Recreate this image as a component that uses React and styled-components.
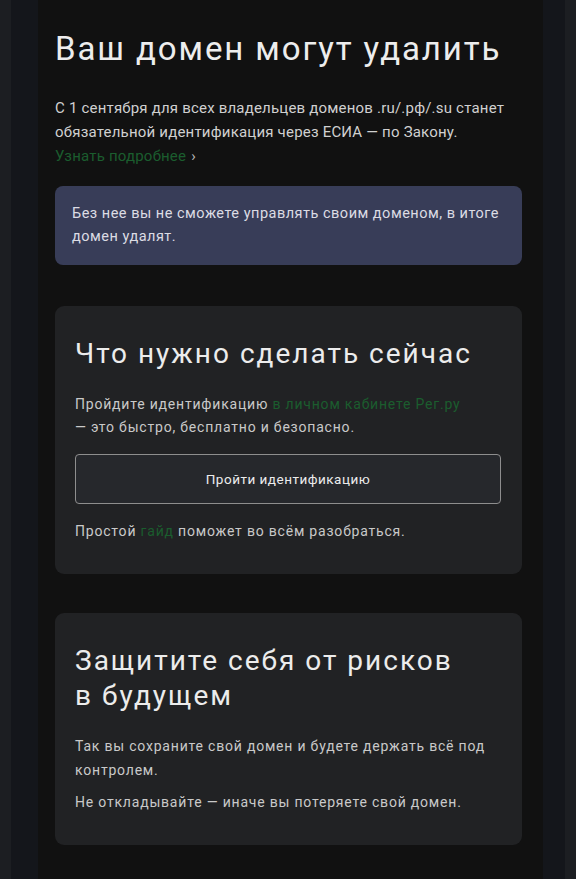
import React from "react";
import styled, { createGlobalStyle } from "styled-components";

const Global = createGlobalStyle`
  html, body { margin: 0; padding: 0; background: #1c1e22; }
  body { font-family: Roboto, "Noto Sans", sans-serif; -webkit-font-smoothing: antialiased; }
  * { box-sizing: border-box; }
`;

const Page = styled.div`
  min-height: 879px;
  padding: 0 11px;
  background: #1c1e22;
  display: flex;
`;

const Frame = styled.div`
  flex: 1;
  background: #14161b;
  padding: 0 22px 0 27px;
  display: flex;
`;

const Column = styled.main`
  flex: 1;
  background: #111111;
  padding: 30px 21px 34px 17px;
  display: flex;
  flex-direction: column;
`;

const Title = styled.h1`
  margin: 0;
  font-size: 33px;
  font-weight: 400;
  line-height: 38px;
  color: #ededed;
  letter-spacing: 1.9px;
`;

const Lead = styled.p`
  margin: 28px 0 0;
  font-size: 15px;
  line-height: 24px;
  color: #d0d0d0;
  letter-spacing: 0.2px;
  white-space: nowrap;
`;

const Link = styled.a`
  color: #1b5d2e;
  text-decoration: none;
`;

const Chevron = styled.span`
  color: #b8b8b8;
  margin-left: 5px;
`;

const Notice = styled.div`
  margin-top: 18px;
  background: #383d58;
  border-radius: 8px;
  padding: 16px 12px 17px 17px;
  font-size: 14.5px;
  line-height: 23px;
  color: #dcdce4;
  letter-spacing: 0.5px;
  white-space: nowrap;
`;

const Card = styled.section`
  margin-top: ${(p) => p.$gap}px;
  background: #212224;
  border-radius: 9px;
  padding: ${(p) => p.$pad};
  display: flex;
  flex-direction: column;
`;

const CardTitle = styled.h2`
  margin: 0;
  font-size: 28px;
  font-weight: 400;
  line-height: 35px;
  color: #ececec;
  letter-spacing: 2px;
`;

const Text = styled.p`
  margin: ${(p) => p.$mt}px 0 0;
  font-size: 14px;
  line-height: ${(p) => p.$lh || 23}px;
  color: #c9c9c9;
  letter-spacing: 0.8px;
`;

const Button = styled.button`
  margin-top: 15px;
  height: 50px;
  width: 100%;
  background: #26282c;
  border: 1.5px solid #8e8e8e;
  border-radius: 4px;
  color: #ececec;
  font-family: Roboto, "Noto Sans", sans-serif;
  font-size: 13.5px;
  font-weight: 400;
  letter-spacing: 0.5px;
  cursor: pointer;
`;

export default function App() {
  return (
    <>
      <Global />
      <Page>
        <Frame>
          <Column>
            <Title>Ваш домен могут удалить</Title>
            <Lead>
              С 1 сентября для всех владельцев доменов .ru/.рф/.su станет
              <br />
              обязательной идентификация через ЕСИА — по Закону.
              <br />
              <Link href="#">Узнать подробнее</Link>
              <Chevron>›</Chevron>
            </Lead>
            <Notice>
              Без нее вы не сможете управлять своим доменом, в итоге
              <br />
              домен удалят.
            </Notice>
            <Card $gap={41} $pad="30px 21px 31px 20px">
              <CardTitle>Что нужно сделать сейчас</CardTitle>
              <Text $mt={22}>
                Пройдите идентификацию <Link href="#">в личном кабинете Рег.ру</Link>
                <br />— это быстро, бесплатно и безопасно.
              </Text>
              <Button>Пройти идентификацию</Button>
              <Text $mt={16}>
                Простой <Link href="#">гайд</Link> поможет во всём разобраться.
              </Text>
            </Card>
            <Card $gap={39} $pad="30px 21px 31px 20px">
              <CardTitle>
                Защитите себя от рисков
                <br />в будущем
              </CardTitle>
              <Text $mt={21} $lh={24}>
                Так вы сохраните свой домен и будете держать всё под
                <br />
                контролем.
              </Text>
              <Text $mt={8} $lh={24}>
                Не откладывайте — иначе вы потеряете свой домен.
              </Text>
            </Card>
          </Column>
        </Frame>
      </Page>
    </>
  );
}
